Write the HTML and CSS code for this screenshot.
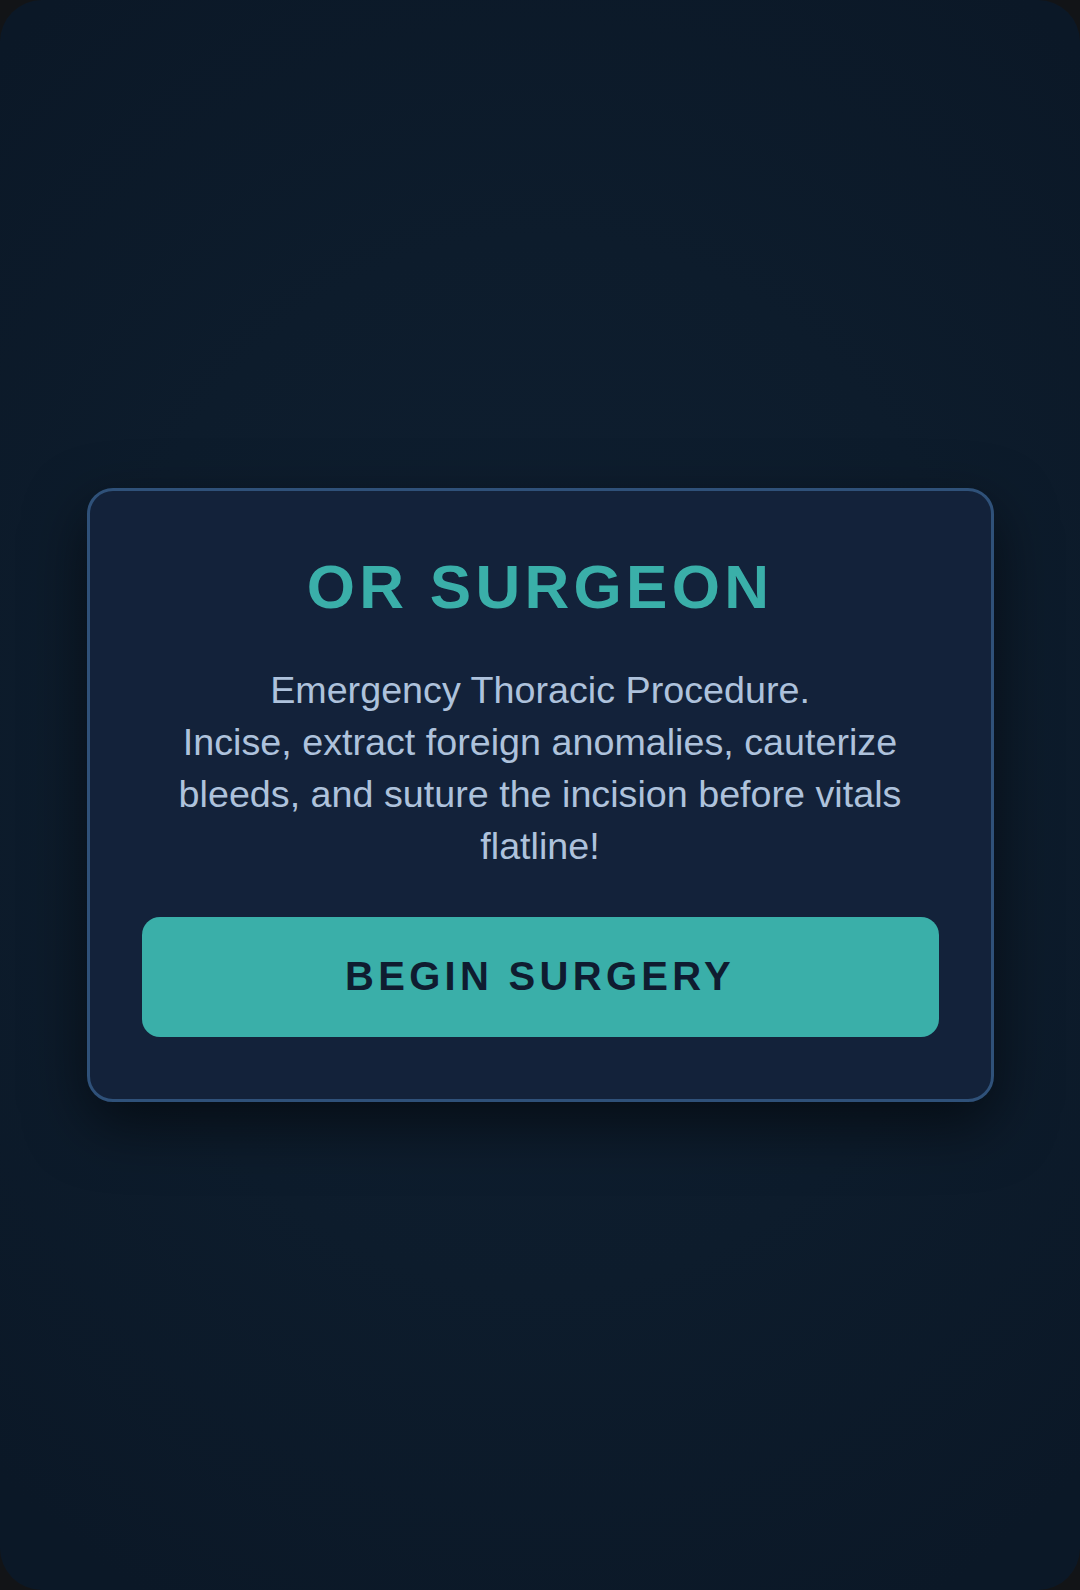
FILE: index.html
```html
<!DOCTYPE html>
<html lang="en">
<head>
<meta charset="utf-8">
<title>OR Surgeon</title>
<link rel="stylesheet" href="styles.css">
</head>
<body>
<div class="screen">
  <div class="card">
    <h1 class="title">OR SURGEON</h1>
    <p class="desc">Emergency Thoracic Procedure.<br>Incise, extract foreign anomalies, cauterize bleeds, and suture the incision before vitals flatline!</p>
    <button class="start">BEGIN SURGERY</button>
  </div>
</div>
</body>
</html>
```
FILE: styles.css
```css
html, body {
  margin: 0;
  padding: 0;
  background: #121417;
}
body {
  width: 1080px;
  height: 1590px;
  font-family: "Liberation Sans", Arial, sans-serif;
}
.screen {
  width: 1080px;
  height: 1590px;
  border-radius: 42px;
  overflow: hidden;
  background: radial-gradient(ellipse 75% 60% at 50% 48%, #0f1f31 0%, #0d1c2c 55%, #0b1827 100%);
  display: flex;
  align-items: center;
  justify-content: center;
}
.card {
  box-sizing: border-box;
  width: 907px;
  background: #13223a;
  border: 3px solid #2f5179;
  border-radius: 26px;
  padding: 59px 52px 62px;
  box-shadow: 0 22px 60px rgba(0, 0, 0, 0.55);
  display: flex;
  flex-direction: column;
  align-items: stretch;
  text-align: center;
}
.title {
  margin: 0 0 40px;
  font-size: 62px;
  line-height: 1.2;
  font-weight: 700;
  letter-spacing: 4.3px;
  color: #3aafa9;
}
.desc {
  margin: 0 0 45px;
  font-size: 37.7px;
  line-height: 52px;
  color: #aec2dc;
}
.start {
  font-family: "Liberation Sans", Arial, sans-serif;
  border: none;
  border-radius: 18px;
  background: #3aafa9;
  color: #0f1c30;
  font-size: 40px;
  font-weight: 700;
  letter-spacing: 4.3px;
  line-height: 45px;
  padding: 37px 0 38px;
  cursor: pointer;
}
```
